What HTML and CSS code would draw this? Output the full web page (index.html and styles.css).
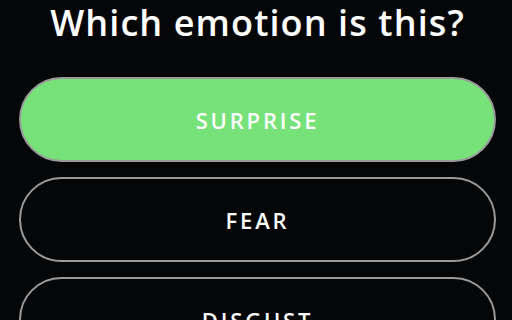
FILE: index.html
```html
<!DOCTYPE html>
<html lang="en">
<head>
<meta charset="UTF-8">
<title>Which emotion is this?</title>
<link rel="stylesheet" href="styles.css">
</head>
<body>
<div class="quiz">
  <h1 class="question">Which emotion is this?</h1>
  <div class="answers">
    <button class="answer answer-picked">SURPRISE</button>
    <button class="answer">FEAR</button>
    <button class="answer">DISGUST</button>
  </div>
</div>
</body>
</html>
```

FILE: styles.css
```css
body {
  margin: 0;
  padding: 0;
  background-color: #050608;
  font-family: "Open Sans", "Noto Sans", sans-serif;
  color: #ffffff;
  overflow: hidden;
}
.quiz {
  padding: 1px 16px 0 19px;
}
.question {
  margin: 0 0 32px 0;
  font-size: 36px;
  line-height: 44px;
  font-weight: 600;
  letter-spacing: 1.1px;
  text-align: center;
}
.answers {
  display: flex;
  flex-direction: column;
  gap: 15px;
}
.answer {
  height: 85px;
  border: 2px solid #9a9a9a;
  border-radius: 43px;
  background-color: #050608;
  color: #ffffff;
  font-family: "Open Sans", "Noto Sans", sans-serif;
  font-size: 22px;
  font-weight: 600;
  letter-spacing: 2.8px;
  padding: 0;
}
.answer-picked {
  background-color: #76e279;
}
```
